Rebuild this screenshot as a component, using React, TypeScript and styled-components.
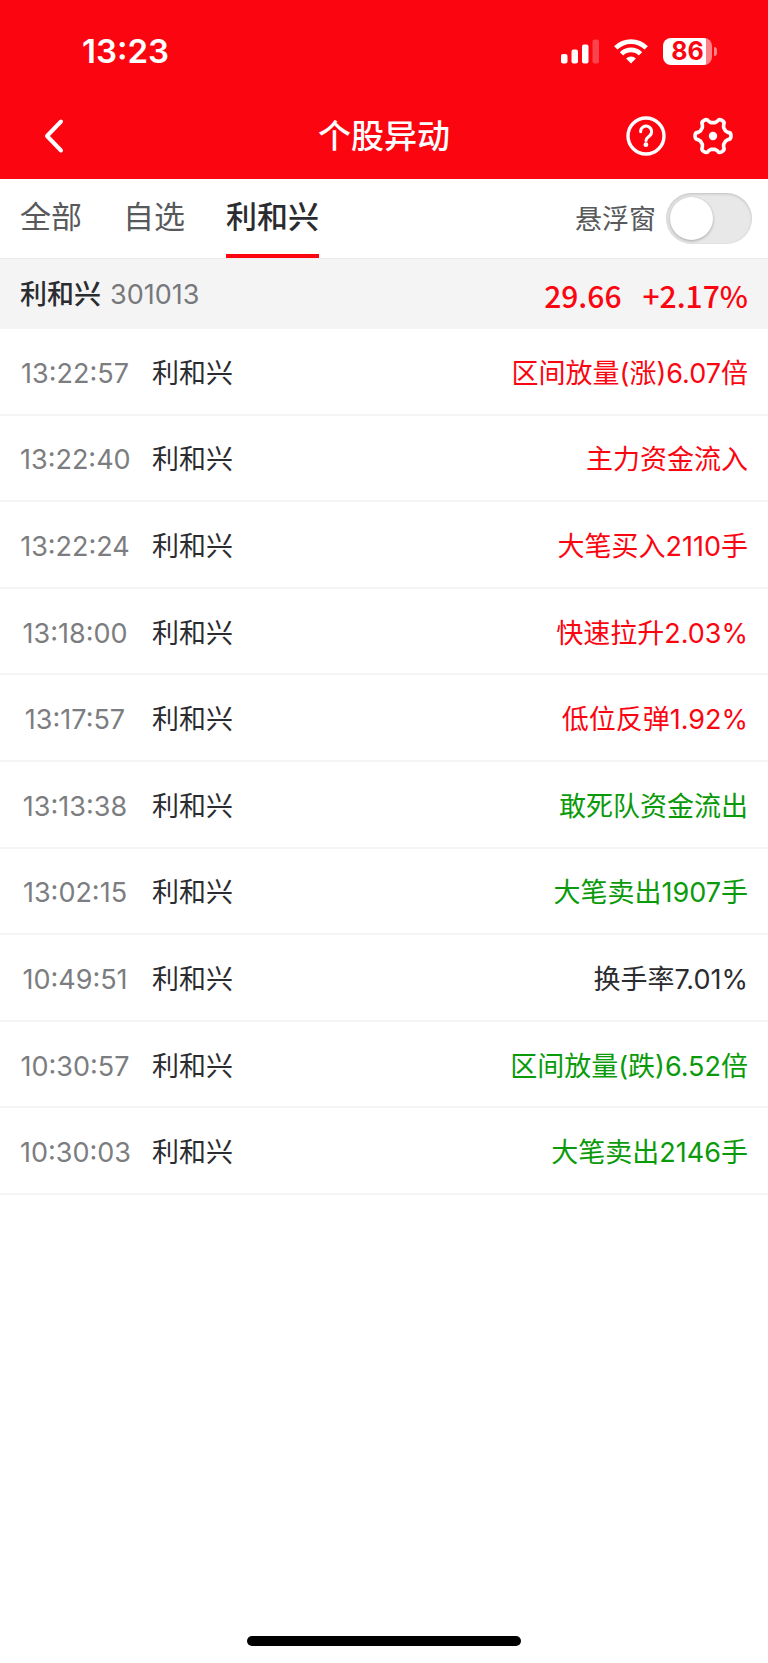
import React, { useState } from "react";
import styled, { createGlobalStyle } from "styled-components";

const RED = "#fb0511";
const GREEN = "#0a9a0a";
const INK = "#2b2c30";

const GlobalStyle = createGlobalStyle`
  * { box-sizing: border-box; }
  body {
    margin: 0;
    background: #fff;
    color: ${INK};
    font-family: Inter, "Noto Sans CJK SC", sans-serif;
  }
  button, input { font: inherit; }
`;

const Page = styled.div`
  display: flex;
  flex-direction: column;
  min-height: 100vh;
`;

const Header = styled.header`
  background: ${RED};
  color: #fff;
`;

const StatusBar = styled.div`
  display: flex;
  align-items: center;
  justify-content: space-between;
  height: 93px;
  padding: 9px 51px 0 82px;
`;

const Clock = styled.time`
  font-size: 33px;
  line-height: 40px;
  font-weight: 600;
`;

const StatusIcons = styled.div`
  display: flex;
  align-items: center;
  gap: 15px;
`;

const Battery = styled.div`
  display: flex;
  align-items: center;
  gap: 2px;
`;

const BatteryBody = styled.div`
  width: 49px;
  height: 27px;
  border-radius: 8px;
  background: linear-gradient(to right, #fff 43px, #fd8288 43px);
  color: ${RED};
  font-size: 25px;
  line-height: 27px;
  font-weight: 700;
  text-align: center;
`;

const BatteryCap = styled.div`
  width: 3px;
  height: 9px;
  border-radius: 0 4px 4px 0;
  background: #fd8288;
`;

const NavBar = styled.nav`
  display: grid;
  grid-template-columns: 1fr auto 1fr;
  align-items: center;
  height: 86px;
  padding: 0 34px;
`;

const Title = styled.h1`
  margin: 0;
  font-size: 33px;
  line-height: 40px;
  font-weight: 500;
`;

const NavActions = styled.div`
  display: flex;
  justify-content: flex-end;
  gap: 25px;
`;

const IconButton = styled.button`
  display: flex;
  justify-self: start;
  padding: 0;
  border: 0;
  background: none;
  color: inherit;
`;

const TabBar = styled.div`
  display: flex;
  align-items: stretch;
  justify-content: space-between;
  height: 79px;
  padding: 0 16px 0 20px;
`;

const Tabs = styled.div`
  display: flex;
  gap: 41px;
`;

const Tab = styled.button<{ $active: boolean }>`
  padding: 0;
  border: 0;
  border-bottom: 4px solid ${(p) => (p.$active ? RED : "transparent")};
  background: none;
  color: ${(p) => (p.$active ? INK : "#58595b")};
  font-size: 31px;
  line-height: 40px;
  font-weight: ${(p) => (p.$active ? 500 : 400)};
`;

const FloatLabel = styled.label`
  display: flex;
  align-items: center;
  gap: 10px;
  color: #58595b;
  font-size: 27px;
  line-height: 40px;
`;

const FloatText = styled.span`
  padding-top: 3px;
`;

const Switch = styled.input`
  appearance: none;
  width: 86px;
  height: 51px;
  margin: 0;
  padding: 4px;
  border-radius: 26px;
  background: #e8e8e8;
  box-shadow: inset 0 1px 3px rgba(0, 0, 0, 0.18);

  &::before {
    content: "";
    display: block;
    width: 43px;
    height: 43px;
    border-radius: 50%;
    background: #fff;
    box-shadow: 0 1px 3px rgba(0, 0, 0, 0.3);
  }
  &:checked { background: ${RED}; }
  &:checked::before { margin-left: auto; }
`;

const Summary = styled.section`
  display: flex;
  align-items: center;
  justify-content: space-between;
  height: 71px;
  padding: 2px 20px 0;
  border-top: 1px solid #ececec;
  background: #f4f4f4;
  font-size: 27px;
  line-height: 40px;
`;

const StockName = styled.div`
  display: flex;
  gap: 9px;
`;

const Name = styled.strong`
  font-weight: 500;
`;

const Code = styled.span`
  color: #77787b;
`;

const Quote = styled.div`
  display: flex;
  gap: 21px;
  color: ${RED};
  font-family: "Noto Sans CJK SC", sans-serif;
  font-size: 30px;
  font-weight: 500;
`;

const List = styled.ul`
  display: grid;
  grid-auto-rows: 1fr;
  min-height: 866px;
  margin: 0;
  padding: 0;
  list-style: none;
`;

const Row = styled.li`
  display: grid;
  grid-template-columns: 110px 1fr auto;
  align-items: center;
  column-gap: 22px;
  padding: 5px 20px 0;
  border-bottom: 2px solid #f4f4f4;
  font-size: 27px;
  line-height: 40px;
`;

const Time = styled.time`
  color: #7c7d80;
  text-align: center;
`;

const Signal = styled.span<{ $color: string }>`
  color: ${(p) => p.$color};
`;

const HomeBar = styled.div`
  width: 274px;
  height: 10px;
  margin: auto auto 17px;
  border-radius: 5px;
  background: #000;
`;

const tabs = ["全部", "自选", "利和兴"];

const events = [
  { time: "13:22:57", text: "区间放量(涨)6.07倍", color: RED },
  { time: "13:22:40", text: "主力资金流入", color: RED },
  { time: "13:22:24", text: "大笔买入2110手", color: RED },
  { time: "13:18:00", text: "快速拉升2.03%", color: RED },
  { time: "13:17:57", text: "低位反弹1.92%", color: RED },
  { time: "13:13:38", text: "敢死队资金流出", color: GREEN },
  { time: "13:02:15", text: "大笔卖出1907手", color: GREEN },
  { time: "10:49:51", text: "换手率7.01%", color: INK },
  { time: "10:30:57", text: "区间放量(跌)6.52倍", color: GREEN },
  { time: "10:30:03", text: "大笔卖出2146手", color: GREEN },
];

const SignalBars = () => (
  <svg width="38" height="25" viewBox="0 0 38 25" fill="#fff" aria-hidden="true">
    <rect x="0" y="15" width="6.5" height="9.5" rx="2" />
    <rect x="10.5" y="10.5" width="6.5" height="14" rx="2" />
    <rect x="21" y="5.5" width="6.5" height="19" rx="2" />
    <rect x="31.5" y="0.5" width="6.5" height="24" rx="2" opacity="0.25" />
  </svg>
);

const Wifi = () => (
  <svg width="34" height="25" viewBox="0 0 34 25" aria-hidden="true">
    <g fill="none" stroke="#fff" strokeWidth="4.8">
      <path d="M1.8 8.9a21.6 21.6 0 0 1 30.4 0" />
      <path d="M7.5 14.9a13.4 13.4 0 0 1 19 0" />
    </g>
    <path fill="#fff" d="M17 24.500l-4.900-5a7 7 0 0 1 9.800 0z" />
  </svg>
);

const Back = () => (
  <svg width="40" height="40" viewBox="0 0 40 40" fill="none" stroke="currentColor" strokeWidth="4" strokeLinecap="round" strokeLinejoin="round" aria-hidden="true">
    <path d="M27 5.500L13 20L27 34.500" />
  </svg>
);

const Help = () => (
  <svg width="42" height="42" viewBox="0 0 42 42" fill="none" stroke="currentColor" strokeWidth="3.4" aria-hidden="true">
    <circle cx="21" cy="21" r="18" />
    <path d="M15.600 16.800a5.500 5.500 0 1 1 8.800 4.200c-2.200 1.700-3.400 2.400-3.400 4.600" strokeWidth="3" strokeLinecap="round" />
    <circle cx="20.900" cy="29.700" r="2.400" fill="currentColor" stroke="none" />
  </svg>
);

// One tooth pointing right, repeated every 60 degrees around the hub.
const tooth: [number, number][] = [
  [12.6, -5], [15, -3.6], [18, -3.6], [18, 0], [18, 3.6], [15, 3.6], [12.6, 5],
];

const gearPath = [0, 1, 2, 3, 4, 5]
  .map((k) => {
    const a = (k * Math.PI) / 3;
    const p = tooth.map(([x, y]) => {
      const px = 21 + x * Math.cos(a) - y * Math.sin(a);
      const py = 21 + x * Math.sin(a) + y * Math.cos(a);
      return `${px.toFixed(2)} ${py.toFixed(2)}`;
    });
    return `${k ? "L" : "M"}${p[0]}L${p[1]}Q${p[2]} ${p[3]}Q${p[4]} ${p[5]}L${p[6]}`;
  })
  .join("") + "Z";

const Gear = () => (
  <svg width="42" height="42" viewBox="0 0 42 42" fill="none" stroke="currentColor" strokeWidth="3.6" strokeLinejoin="round" aria-hidden="true">
    <path d={gearPath} />
    <circle cx="21" cy="21" r="4.200" fill="currentColor" stroke="none" />
  </svg>
);

export default function App() {
  const [active, setActive] = useState(2);
  return (
    <Page>
      <GlobalStyle />
      <Header>
        <StatusBar>
          <Clock>13:23</Clock>
          <StatusIcons>
            <SignalBars />
            <Wifi />
            <Battery>
              <BatteryBody>86</BatteryBody>
              <BatteryCap />
            </Battery>
          </StatusIcons>
        </StatusBar>
        <NavBar>
          <IconButton aria-label="返回"><Back /></IconButton>
          <Title>个股异动</Title>
          <NavActions>
            <IconButton aria-label="帮助"><Help /></IconButton>
            <IconButton aria-label="设置"><Gear /></IconButton>
          </NavActions>
        </NavBar>
      </Header>
      <TabBar>
        <Tabs>
          {tabs.map((t, i) => (
            <Tab key={t} $active={i === active} onClick={() => setActive(i)}>{t}</Tab>
          ))}
        </Tabs>
        <FloatLabel>
          <FloatText>悬浮窗</FloatText>
          <Switch type="checkbox" role="switch" />
        </FloatLabel>
      </TabBar>
      <Summary>
        <StockName>
          <Name>利和兴</Name>
          <Code>301013</Code>
        </StockName>
        <Quote>
          <span>29.66</span>
          <span>+2.17%</span>
        </Quote>
      </Summary>
      <List>
        {events.map((e) => (
          <Row key={e.time}>
            <Time>{e.time}</Time>
            <span>利和兴</span>
            <Signal $color={e.color}>{e.text}</Signal>
          </Row>
        ))}
      </List>
      <HomeBar />
    </Page>
  );
}
